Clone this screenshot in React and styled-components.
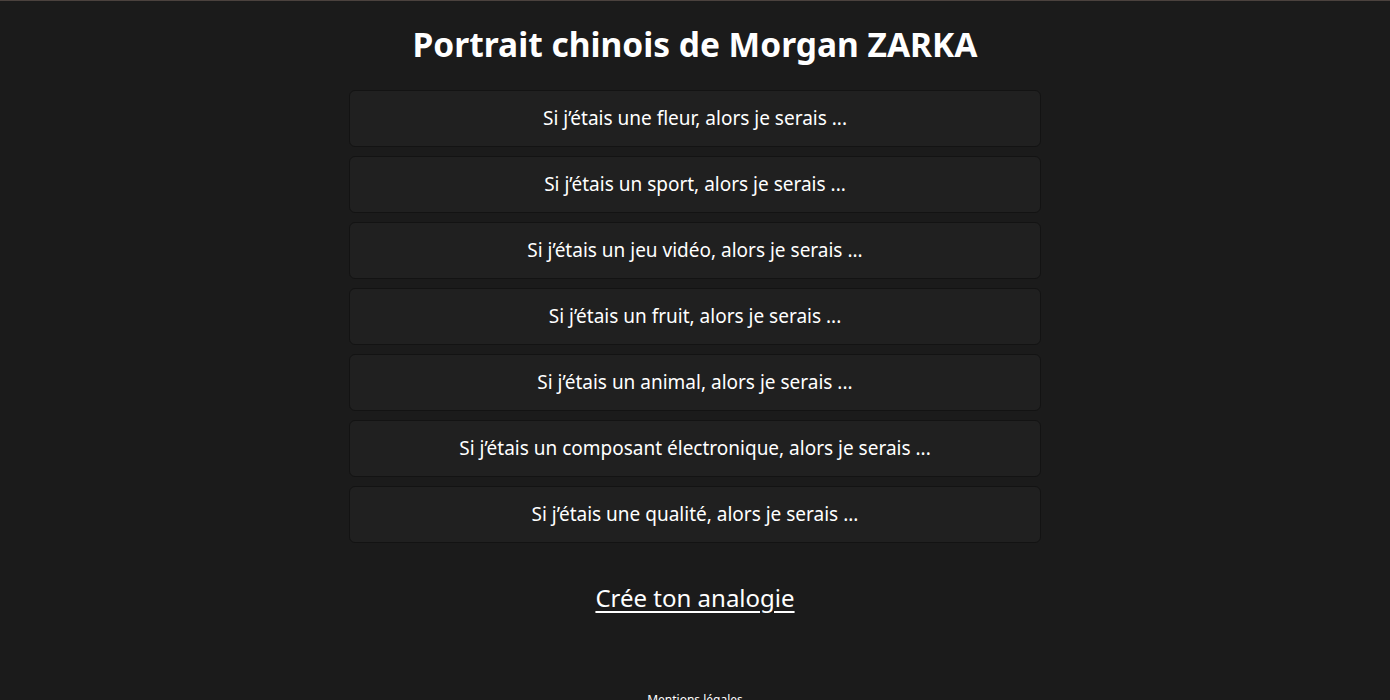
import React from "react";
import styled, { createGlobalStyle } from "styled-components";

const GlobalStyle = createGlobalStyle`
  html, body {
    margin: 0;
    padding: 0;
    background: #1b1b1b;
    color: #ffffff;
    font-family: "Noto Sans", "DejaVu Sans", sans-serif;
  }
  body {
    border-top: 1px solid #4b423e;
  }
`;

const questions = [
  "Si j’étais une fleur, alors je serais ...",
  "Si j’étais un sport, alors je serais ...",
  "Si j’étais un jeu vidéo, alors je serais ...",
  "Si j’étais un fruit, alors je serais ...",
  "Si j’étais un animal, alors je serais ...",
  "Si j’étais un composant électronique, alors je serais ...",
  "Si j’étais une qualité, alors je serais ...",
];

const App = () => {
  return (
    <>
      <GlobalStyle />
      <Page>
        <Title>Portrait chinois de Morgan ZARKA</Title>
        <List>
          {questions.map((q) => (
            <Card key={q}>{q}</Card>
          ))}
        </List>
        <CreateLink href="#">Crée ton analogie</CreateLink>
        <Footer>Mentions légales</Footer>
      </Page>
    </>
  );
};

const Page = styled.main`
  display: flex;
  flex-direction: column;
  align-items: center;
  padding-top: 22px;
`;

const Title = styled.h1`
  margin: 0 0 25px;
  font-size: 33.5px;
  font-weight: 700;
  line-height: 42px;
`;

const List = styled.div`
  width: 692px;
  display: flex;
  flex-direction: column;
  gap: 9px;
`;

const Card = styled.div`
  box-sizing: border-box;
  height: 57px;
  padding-bottom: 2px;
  display: flex;
  align-items: center;
  justify-content: center;
  background: #202020;
  border: 1px solid #131313;
  border-radius: 6px;
  font-size: 19px;
`;

const CreateLink = styled.a`
  margin-top: 38px;
  color: #ffffff;
  font-size: 24px;
  line-height: 34px;
  text-decoration: underline;
  text-underline-offset: 4px;
  text-decoration-thickness: 2px;
`;

const Footer = styled.footer`
  margin-top: 76px;
  font-size: 12px;
`;

export default App;
